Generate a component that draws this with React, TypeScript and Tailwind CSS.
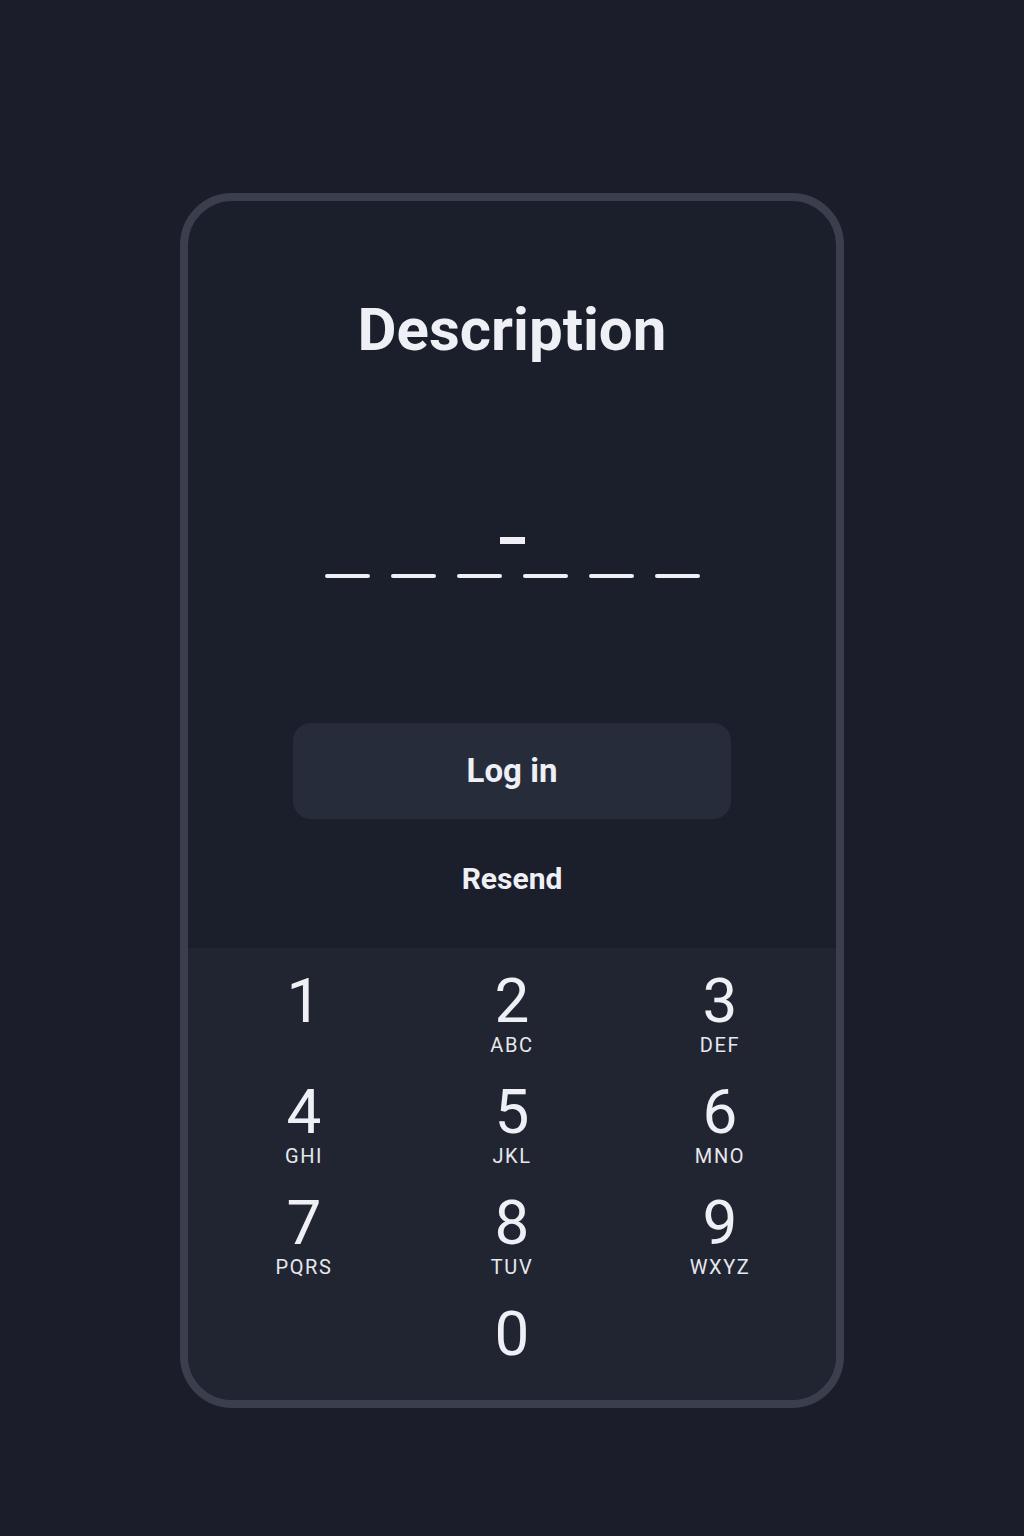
import React from "react";

// Keypad keys: digit + letters line (empty for 1 and 0)
const keys: { digit: string; letters: string }[] = [
  { digit: "1", letters: "" },
  { digit: "2", letters: "ABC" },
  { digit: "3", letters: "DEF" },
  { digit: "4", letters: "GHI" },
  { digit: "5", letters: "JKL" },
  { digit: "6", letters: "MNO" },
  { digit: "7", letters: "PQRS" },
  { digit: "8", letters: "TUV" },
  { digit: "9", letters: "WXYZ" },
];

const Key = ({ digit, letters }: { digit: string; letters: string }) => (
  <button type="button" className="flex h-[111px] flex-col items-center">
    <span className="text-[62px] leading-none font-normal text-[#eef0f5]">{digit}</span>
    <span className="mt-[3px] h-[20px] text-[20px] leading-none tracking-[0.08em] text-[#e6e8ee]">{letters}</span>
  </button>
);

export default function App() {
  return (
    <div
      className="min-h-[1536px] w-full bg-[#1b1d2a] pt-[193px]"
      style={{ fontFamily: "Roboto, 'Noto Sans', sans-serif" }}
    >
      <div className="mx-auto flex h-[1215px] w-[664px] flex-col overflow-hidden rounded-[52px] border-[8px] border-[#3b3e4d] bg-[#1b1e2b]">
        <div className="flex flex-col items-center">
          <h1 className="pt-[99px] text-[60px] leading-none font-bold text-[#eef0f5]">Description</h1>

          {/* code entry */}
          <div className="mt-[177px] flex flex-col items-center">
            <div className="h-[7px] w-[25px] bg-[#eef0f5]" />
            <div className="mt-[30px] flex gap-[21px]">
              {[0, 1, 2, 3, 4, 5].map((i) => (
                <div key={i} className="h-[4px] w-[45px] rounded-full bg-[#eef0f5]" />
              ))}
            </div>
          </div>

          <button
            type="button"
            className="mt-[145px] flex h-[96px] w-[438px] items-center justify-center rounded-[18px] bg-[#272c3b] text-[33px] font-bold text-[#eef0f5]"
          >
            Log in
          </button>

          <button type="button" className="mt-[45px] text-[30px] leading-none font-bold text-[#eef0f5]">
            Resend
          </button>
        </div>

        <div className="mt-[54px] flex-1 bg-[#212532] px-[12px] pt-[22px]">
          <div className="grid grid-cols-3">
            {keys.map((k) => (
              <Key key={k.digit} digit={k.digit} letters={k.letters} />
            ))}
            <div />
            <button type="button" className="flex flex-col items-center">
              <span className="text-[62px] leading-none font-normal text-[#eef0f5]">0</span>
            </button>
            <div />
          </div>
        </div>
      </div>
    </div>
  );
}
